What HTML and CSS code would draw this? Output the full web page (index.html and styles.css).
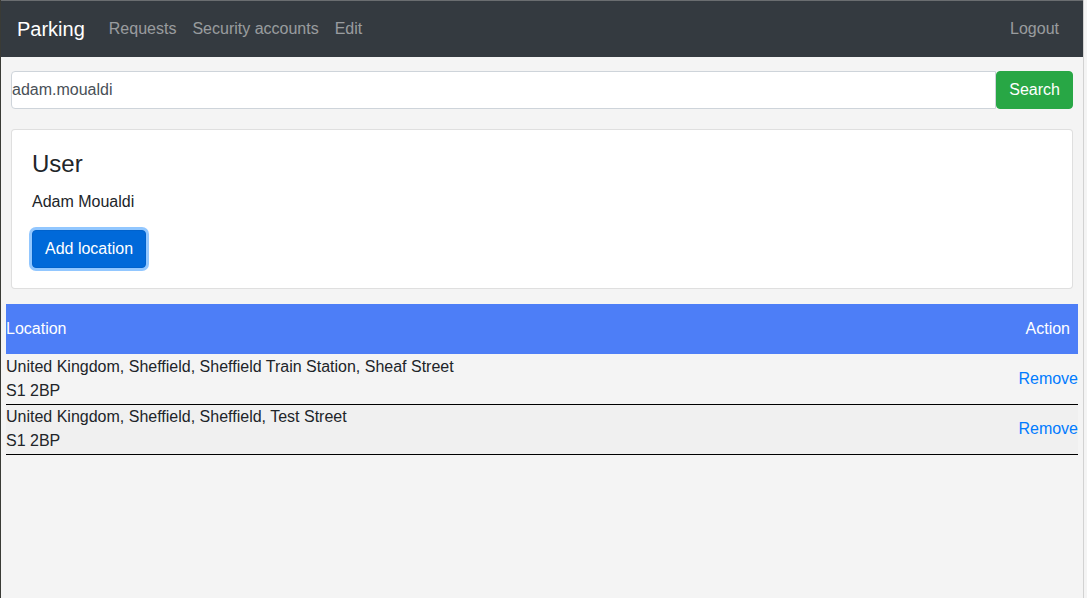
FILE: index.html
```html
<!DOCTYPE html>
<html lang="en">
<head>
<meta charset="utf-8">
<title>Parking</title>
<link rel="stylesheet" href="styles.css">
</head>
<body>
<div class="page">
  <nav class="navbar">
    <a class="brand" href="#">Parking</a>
    <ul class="nav">
      <li><a class="nav-link" href="#">Requests</a></li>
      <li><a class="nav-link" href="#">Security accounts</a></li>
      <li><a class="nav-link" href="#">Edit</a></li>
    </ul>
    <ul class="nav nav-right">
      <li><a class="nav-link" href="#">Logout</a></li>
    </ul>
  </nav>

  <div class="container">
    <form class="search">
      <input class="search-input" type="text" value="adam.moualdi">
      <button class="btn btn-success" type="button">Search</button>
    </form>

    <div class="card">
      <h4 class="card-title">User</h4>
      <p class="card-text">Adam Moualdi</p>
      <button class="btn btn-primary focused" type="button">Add location</button>
    </div>
  </div>

  <div class="table-wrap">
    <table class="locations">
      <thead>
        <tr><th class="col-loc">Location</th><th class="col-act">Action</th></tr>
      </thead>
      <tbody>
        <tr>
          <td class="col-loc">United Kingdom, Sheffield, Sheffield Train Station, Sheaf Street<br>S1 2BP</td>
          <td class="col-act"><a class="remove" href="#">Remove</a></td>
        </tr>
        <tr>
          <td class="col-loc">United Kingdom, Sheffield, Sheffield, Test Street<br>S1 2BP</td>
          <td class="col-act"><a class="remove" href="#">Remove</a></td>
        </tr>
      </tbody>
    </table>
  </div>
</div>
</body>
</html>
```

FILE: styles.css
```css
* { box-sizing: border-box; }

html {
  background: #f4f4f4;
  height: 100%;
}

body {
  margin: 0;
  height: 100%;
  font-family: "Liberation Sans", Arial, sans-serif;
  font-size: 16px;
  line-height: 24px;
  color: #212529;
}

.page {
  width: 1084px;
  min-height: 100%;
  background: #f4f4f4;
  border-left: 1px solid #3a3b36;
  border-right: 1px solid #d2d2d2;
}

/* navbar */
.navbar {
  display: flex;
  align-items: center;
  height: 57px;
  padding: 8px 16px;
  background: #343a40;
  border-top: 1px solid #6a6d70;
}

.brand {
  font-size: 20px;
  line-height: 30px;
  color: #fff;
  text-decoration: none;
  margin-right: 16px;
  padding: 5px 0;
}

.nav {
  display: flex;
  list-style: none;
  margin: 0;
  padding: 0;
}

.nav-right { margin-left: auto; }

.nav-link {
  display: block;
  padding: 8px;
  color: rgba(255, 255, 255, 0.5);
  text-decoration: none;
}

/* content container */
.container {
  padding: 14px 10px 0;
}

.search {
  display: flex;
  margin: 0;
}

.search-input {
  flex: 1;
  height: 38px;
  padding: 0;
  font: inherit;
  color: #495057;
  background: #fff;
  border: 1px solid #ced4da;
  border-radius: 4px 0 0 4px;
  outline: none;
}

.btn {
  font: inherit;
  line-height: 24px;
  padding: 6px 12px;
  border: 1px solid transparent;
  border-radius: 4px;
  color: #fff;
  cursor: pointer;
}

.btn-success {
  background: #28a745;
  border-color: #28a745;
}

.btn-primary {
  background: #007bff;
  border-color: #007bff;
}

.btn-primary.focused {
  background: #0069d9;
  border-color: #0062cc;
  box-shadow: 0 0 0 3px rgba(38, 143, 255, 0.5);
}

.card {
  margin-top: 20px;
  padding: 20px;
  background: #fff;
  border: 1px solid rgba(0, 0, 0, 0.125);
  border-radius: 4px;
}

.card-title {
  margin: 0 0 12px;
  font-size: 24px;
  line-height: 28px;
  font-weight: 500;
}

.card-text {
  margin: 0 0 16px;
}

/* table */
.table-wrap {
  padding: 15px 5px 0;
}

.locations {
  width: 100%;
  border-collapse: collapse;
}

.locations th {
  background: #4d7ef7;
  color: #fff;
  font-weight: normal;
  padding: 13px 0;
  text-align: left;
}

.locations th.col-act {
  text-align: right;
  padding-right: 8px;
}

.locations td {
  padding: 0 0 1px;
  border-bottom: 1px solid #000;
  vertical-align: middle;
}

.locations tbody tr:first-child td {
  padding-top: 1px;
}

.locations tbody tr:nth-child(even) td {
  background: #f0f0f0;
}

.locations td.col-act {
  text-align: right;
}

.remove {
  color: #007bff;
  text-decoration: none;
}
```
